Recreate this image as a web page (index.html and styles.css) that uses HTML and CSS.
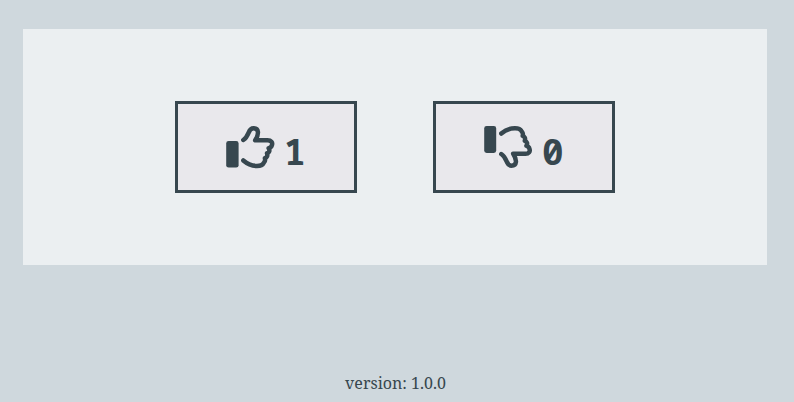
FILE: index.html
```html
<!DOCTYPE html>
<html lang="en">
<head>
<meta charset="utf-8">
<title>Votes</title>
<link rel="stylesheet" href="styles.css">
</head>
<body>
<main class="panel">
  <button class="vote" aria-label="Like">
    <svg class="icon" viewBox="0 0 50 44">
      <rect class="cuff" x="1.2" y="16" width="12.4" height="26.6" rx="2.4"/>
      <path class="hand" d="M18.300 15C25 10.500 22.500 3.300 28.500 3.300C34 3.300 34.200 9 30.200 15.300H42.500C46.300 15.300 47.700 17.500 47 19.800C46.500 21.600 45.500 22.800 43.600 23.200C45 25.500 44.500 27.600 42 28.200C42.800 30.500 42 32.600 39.900 33.200C40.800 35.800 39.500 37 38.500 38.200C37.200 40.900 35 40.900 32 40.900C26 40.900 22.500 39.100 18.300 35.500"/>
    </svg>
    <span class="count">1</span>
  </button>
  <button class="vote" aria-label="Dislike">
    <svg class="icon" viewBox="0 0 50 44">
      <g transform="matrix(1 0 0 -1 0 44)">
        <rect class="cuff" x="1.2" y="16" width="12" height="26.900" rx="2.4"/>
        <path class="hand" d="M18.300 15C25 10.500 22.500 3.300 28.500 3.300C34 3.300 34.200 9 30.200 15.300H42.500C46 15.300 47.200 17.500 46.600 19.800C46.100 21.600 45.300 22.800 43.400 23.200C44.800 25.500 44 27.600 41.800 28.200C42.600 30.500 41.700 32.600 39.700 33.200C40.600 35.800 39.300 37 38.300 38.200C37 40.800 35 40.800 32 40.800C26 40.800 22.500 39.100 18.300 35.500"/>
      </g>
    </svg>
    <span class="count">0</span>
  </button>
</main>
<footer class="version">version: 1.0.0</footer>
</body>
</html>
```

FILE: styles.css
```css
body {
  margin: 0;
  padding: 29px 27px 0 23px;
  background: #cfd8dd;
  color: #37474f;
}

.panel {
  display: flex;
  justify-content: center;
  align-items: center;
  gap: 76px;
  height: 236px;
  background: #ebeff1;
}

.vote {
  display: flex;
  align-items: flex-start;
  box-sizing: border-box;
  width: 182px;
  height: 92px;
  margin: 0;
  padding: 21px 0 0 47px;
  border: 3px solid #37474f;
  background: #e9e8ec;
  color: #37474f;
}

.icon {
  flex: none;
  width: 50px;
  height: 44px;
}

.cuff {
  fill: #37474f;
}

.hand {
  fill: none;
  stroke: #37474f;
  stroke-width: 4.5;
  stroke-linecap: round;
  stroke-linejoin: round;
}

.count {
  margin: 2px 0 0 9px;
  font: bold 36px/49px "Noto Sans Mono", "Noto Mono", "DejaVu Sans Mono", monospace;
}

.version {
  margin-top: 107px;
  padding-left: 1px;
  text-align: center;
  font: 16px/22px "Noto Serif", "Droid Serif", "Liberation Serif", serif;
}
```
